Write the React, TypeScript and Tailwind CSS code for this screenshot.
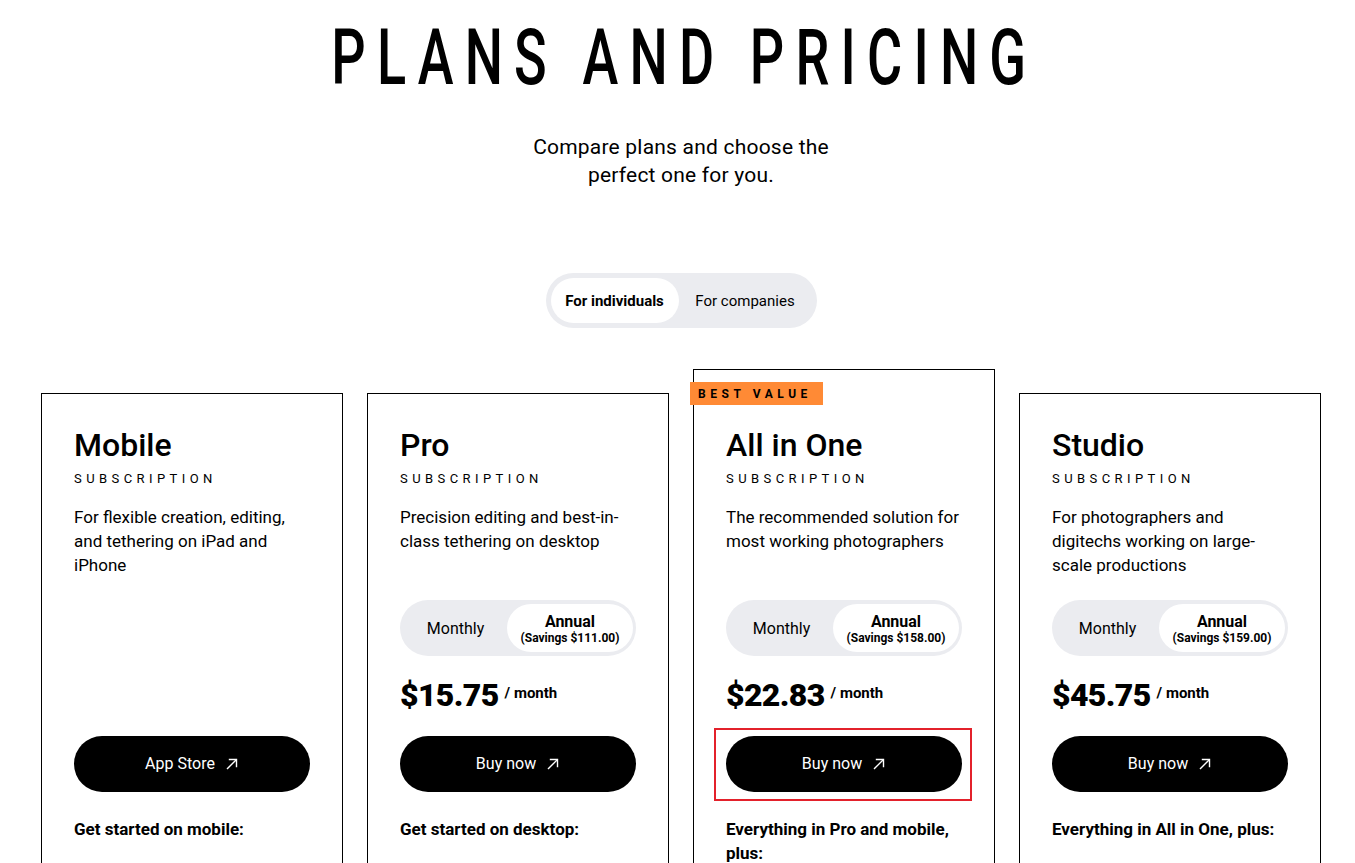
import React from "react";

const ArrowUpRight = () => (
  <svg width="14" height="14" viewBox="0 0 14 14" fill="none" stroke="currentColor" strokeWidth="1.4" strokeLinecap="square">
    <path d="M2.5 11.5L11 3" />
    <path d="M4.5 2.5H11.5V9.5" />
  </svg>
);

type Plan = {
  name: string;
  desc: string;
  cta: string;
  price?: string;
  savings?: string;
  footer: string;
  featured?: boolean;
};

const plans: Plan[] = [
  {
    name: "Mobile",
    desc: "For flexible creation, editing, and tethering on iPad and iPhone",
    cta: "App Store",
    footer: "Get started on mobile:",
  },
  {
    name: "Pro",
    desc: "Precision editing and best-in-class tethering on desktop",
    cta: "Buy now",
    price: "$15.75",
    savings: "(Savings $111.00)",
    footer: "Get started on desktop:",
  },
  {
    name: "All in One",
    desc: "The recommended solution for most working photographers",
    cta: "Buy now",
    price: "$22.83",
    savings: "(Savings $158.00)",
    footer: "Everything in Pro and mobile, plus:",
    featured: true,
  },
  {
    name: "Studio",
    desc: "For photographers and digitechs working on large-scale productions",
    cta: "Buy now",
    price: "$45.75",
    savings: "(Savings $159.00)",
    footer: "Everything in All in One, plus:",
  },
];

function Card({ plan }: { plan: Plan }) {
  return (
    <div
      className={
        plan.featured
          ? "relative border border-black px-8 pt-[55px] pb-[120px]"
          : "relative mt-6 border border-black px-8 pt-[31px] pb-[120px]"
      }
    >
      {plan.featured && (
        <div className="absolute -left-[4px] top-[12px] flex h-[23px] w-[133px] items-center bg-[#ff8a35] pl-[8px] text-[12px] font-bold tracking-[0.38em] text-black">
          BEST VALUE
        </div>
      )}
      <h2 className="text-[32px] font-medium leading-[40px]">{plan.name}</h2>
      <div className="mt-[6px] text-[13px] leading-[16px] tracking-[0.34em]">SUBSCRIPTION</div>
      <p className="mt-[18px] h-[72px] text-[17px] leading-[24px]">{plan.desc}</p>
      <div className="mt-[23px] h-[136px]">
        {plan.price && (
          <>
            <div className="flex h-[56px] items-stretch rounded-full bg-[#ebecf0] p-1 pr-[3px]">
              <div className="flex flex-1 items-center justify-center pt-[2px] text-[16px]">Monthly</div>
              <div className="flex w-[126px] flex-col items-center justify-center rounded-full bg-white">
                <span className="text-[16px] font-bold leading-[19px]">Annual</span>
                <span className="text-[12px] font-bold leading-[14px]">{plan.savings}</span>
              </div>
            </div>
            <div className="mt-[19px] flex h-[40px] items-start">
              <span className="text-[32px] font-black leading-[40px] tracking-[-0.02em]">{plan.price}</span>
              <span className="ml-[6px] mt-[9px] text-[15px] font-bold leading-[18px]">/ month</span>
            </div>
          </>
        )}
      </div>
      <div className="relative">
        <button className="flex h-[56px] w-full items-center justify-center gap-[10px] rounded-full bg-black text-[16px] text-white">
          <span>{plan.cta}</span>
          <ArrowUpRight />
        </button>
        {plan.featured && (
          <div className="pointer-events-none absolute -top-[8px] -bottom-[9px] -left-[12px] -right-[10px] border-2 border-[#e3212b]" />
        )}
      </div>
      <p className="mt-[25px] text-[17px] font-bold leading-[24px]">{plan.footer}</p>
    </div>
  );
}

export default function App() {
  return (
    <div className="min-h-screen bg-white font-[Roboto,sans-serif] text-black">
      <div className="flex flex-col items-center pl-[7px]">
        <h1 className="ml-[7px] mt-[20px] text-[77px] font-medium leading-none">
          <span className="inline-block scale-x-[0.7] tracking-[16px]">PLANS AND PRICING</span>
        </h1>
        <p className="mt-[36px] text-center text-[21px] leading-[28px] tracking-[0.01em]">
          Compare plans and choose the
          <br />
          perfect one for you.
        </p>
        <div className="mt-[84px] flex h-[55px] w-[271px] rounded-full bg-[#ebecf0] p-[5px]">
          <div className="flex w-[128px] items-center justify-center rounded-full bg-white pt-[2px] text-[15px] font-bold">
            For individuals
          </div>
          <div className="flex flex-1 items-center justify-center pt-[2px] text-[15px]">For companies</div>
        </div>
      </div>
      <div className="mt-[41px] grid grid-cols-4 items-start gap-6 pl-[41px] pr-[34px]">
        {plans.map((p) => (
          <Card key={p.name} plan={p} />
        ))}
      </div>
    </div>
  );
}
